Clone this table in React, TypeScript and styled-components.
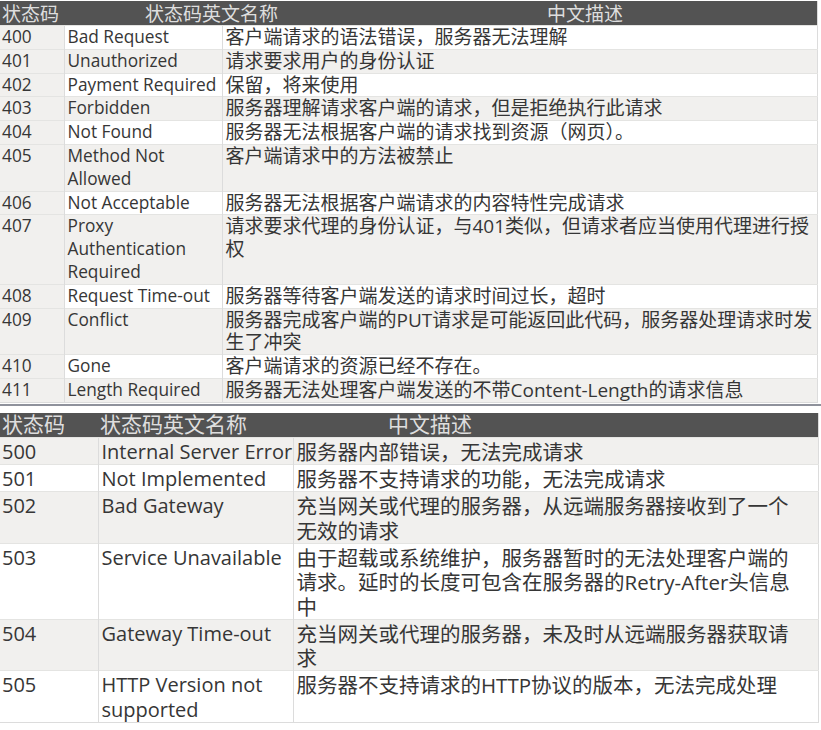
import React from 'react'
import styled, { createGlobalStyle } from 'styled-components'

interface rowInterface {
    code: string
    name: string
    desc: string
}

interface specInterface {
    cols: number[]
    latin: number
    cjk: number
    line: number
    pad: number
    head: number
    headTop: number
    indents: number[]
    shadeCode: boolean
    shadeFirst: boolean
}

const clientErrors: rowInterface[] = [
    { code: '400', name: 'Bad Request', desc: '客户端请求的语法错误，服务器无法理解' },
    { code: '401', name: 'Unauthorized', desc: '请求要求用户的身份认证' },
    { code: '402', name: 'Payment Required', desc: '保留，将来使用' },
    { code: '403', name: 'Forbidden', desc: '服务器理解请求客户端的请求，但是拒绝执行此请求' },
    { code: '404', name: 'Not Found', desc: '服务器无法根据客户端的请求找到资源（网页）。' },
    { code: '405', name: 'Method Not\nAllowed', desc: '客户端请求中的方法被禁止' },
    { code: '406', name: 'Not Acceptable', desc: '服务器无法根据客户端请求的内容特性完成请求' },
    { code: '407', name: 'Proxy\nAuthentication\nRequired', desc: '请求要求代理的身份认证，与401类似，但请求者应当使用代理进行授\n权' },
    { code: '408', name: 'Request Time-out', desc: '服务器等待客户端发送的请求时间过长，超时' },
    { code: '409', name: 'Conflict', desc: '服务器完成客户端的PUT请求是可能返回此代码，服务器处理请求时发\n生了冲突' },
    { code: '410', name: 'Gone', desc: '客户端请求的资源已经不存在。' },
    { code: '411', name: 'Length Required', desc: '服务器无法处理客户端发送的不带Content-Length的请求信息' },
]

const serverErrors: rowInterface[] = [
    { code: '500', name: 'Internal Server Error', desc: '服务器内部错误，无法完成请求' },
    { code: '501', name: 'Not Implemented', desc: '服务器不支持请求的功能，无法完成请求' },
    { code: '502', name: 'Bad Gateway', desc: '充当网关或代理的服务器，从远端服务器接收到了一个\n无效的请求' },
    { code: '503', name: 'Service Unavailable', desc: '由于超载或系统维护，服务器暂时的无法处理客户端的\n请求。延时的长度可包含在服务器的Retry-After头信息\n中' },
    { code: '504', name: 'Gateway Time-out', desc: '充当网关或代理的服务器，未及时从远端服务器获取请\n求' },
    { code: '505', name: 'HTTP Version not\nsupported', desc: '服务器不支持请求的HTTP协议的版本，无法完成处理' },
]

const clientSpec: specInterface = {
    cols: [64, 158, 595],
    latin: 17.3,
    cjk: 19,
    line: 22.8,
    pad: 0,
    head: 19,
    headTop: 2,
    indents: [2, 81, 325],
    shadeCode: true,
    shadeFirst: false,
}

const serverSpec: specInterface = {
    cols: [98, 195, 525],
    latin: 20,
    cjk: 20.5,
    line: 24.3,
    pad: 2,
    head: 21,
    headTop: 0,
    indents: [2, 2, 95],
    shadeCode: false,
    shadeFirst: true,
}

const headers = ['状态码', '状态码英文名称', '中文描述']

const StatusTable = (props: { rows: rowInterface[]; spec: specInterface }) => {
    const { rows, spec } = props
    const total = spec.cols.reduce((a, b) => a + b, 0)
    return (
        <Sheet $width={total} $line={spec.line}>
            <colgroup>
                {spec.cols.map((w, i) => <col key={i} style={{ width: w }} />)}
            </colgroup>
            <thead>
                <tr>
                    {headers.map((h, i) => (
                        <HeadCell key={h} $indent={spec.indents[i]} $size={spec.head} $top={spec.headTop}>{h}</HeadCell>
                    ))}
                </tr>
            </thead>
            <tbody>
                {rows.map((r, i) => {
                    const shade = spec.shadeFirst ? i % 2 === 0 : i % 2 === 1
                    return (
                        <tr key={r.code}>
                            <CodeCell $shade={shade || spec.shadeCode} $size={spec.latin} $pad={spec.pad}>{r.code}</CodeCell>
                            <Cell $shade={shade} $size={spec.latin} $pad={spec.pad}>{r.name}</Cell>
                            <Cell $shade={shade} $size={spec.cjk} $pad={spec.pad}>{r.desc}</Cell>
                        </tr>
                    )
                })}
            </tbody>
        </Sheet>
    )
}

export default function App() {
    return (
        <>
            <GlobalStyle />
            <Page>
                <StatusTable rows={clientErrors} spec={clientSpec} />
                <Divider />
                <StatusTable rows={serverErrors} spec={serverSpec} />
            </Page>
        </>
    )
}

const GlobalStyle = createGlobalStyle`
body {
    margin: 0;
    background: #ffffff;
    font-family: "Open Sans", "Noto Sans CJK SC", sans-serif;
    color: #363636;
}
`

const Page = styled.div`
padding-top: 1px;
width: 821px;
`

const Sheet = styled.table<{ $width: number; $line: number }>`
width: ${p => p.$width}px;
table-layout: fixed;
border-collapse: collapse;
line-height: ${p => p.$line}px;
border-right: 1px solid #dcdcdc;
border-bottom: 1px solid #dcdcdc;
`

const HeadCell = styled.th<{ $indent: number; $size: number; $top: number }>`
background: #535353;
color: #dedede;
font-weight: 400;
font-size: ${p => p.$size}px;
line-height: 22px;
padding: ${p => p.$top}px 0 ${p => 2 - p.$top}px ${p => p.$indent}px;
text-align: left;
white-space: nowrap;
`

const Cell = styled.td<{ $shade: boolean; $size: number; $pad: number }>`
background: ${p => (p.$shade ? '#f1f0ee' : '#ffffff')};
font-size: ${p => p.$size}px;
padding: ${p => p.$pad}px 0 0 3px;
vertical-align: top;
white-space: pre;
border-left: 1px solid #dcdcdc;
border-top: 1px solid #e4e4e2;
`

const CodeCell = styled(Cell)`
padding-left: 2px;
border-left: none;
`

const Divider = styled.div`
height: 2px;
margin: 1px 0 7px;
background: #8f929c;
`
